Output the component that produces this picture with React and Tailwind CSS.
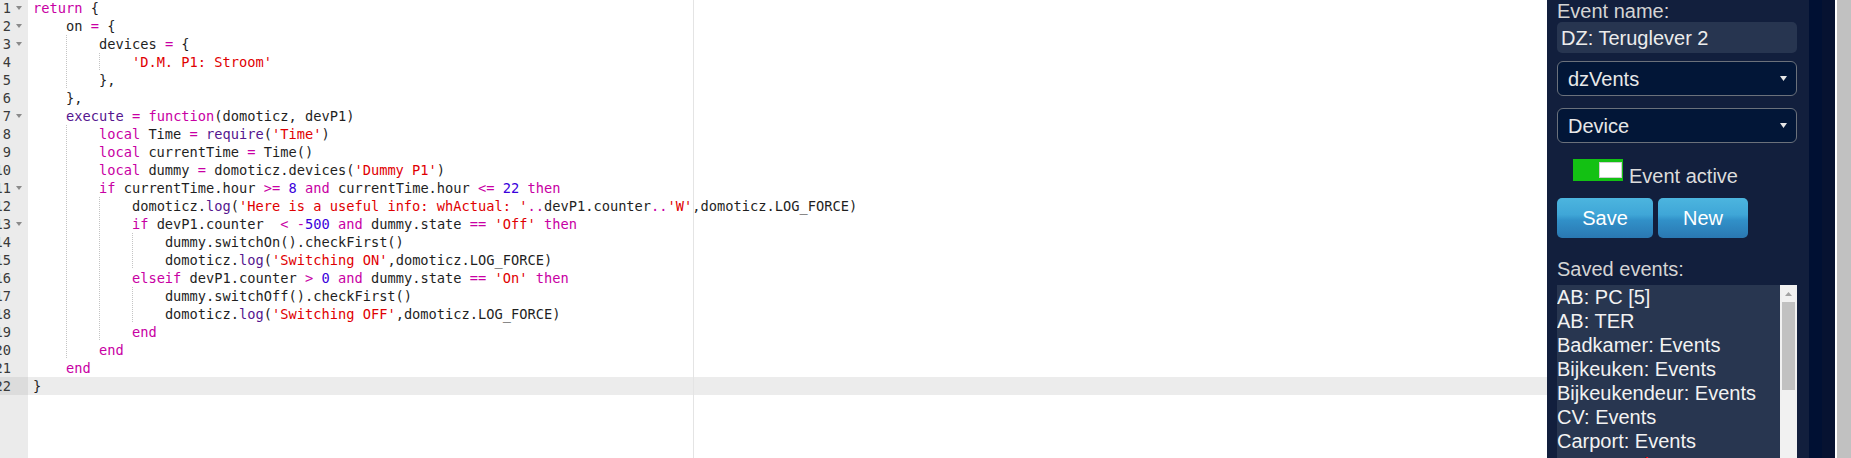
import React from 'react'

const CODE = [
  "return {",
  "    on = {",
  "        devices = {",
  "            'D.M. P1: Stroom'",
  "        },",
  "    },",
  "    execute = function(domoticz, devP1)",
  "        local Time = require('Time')",
  "        local currentTime = Time()",
  "        local dummy = domoticz.devices('Dummy P1')",
  "        if currentTime.hour >= 8 and currentTime.hour <= 22 then",
  "            domoticz.log('Here is a useful info: whActual: '..devP1.counter..'W',domoticz.LOG_FORCE)",
  "            if devP1.counter  < -500 and dummy.state == 'Off' then",
  "                dummy.switchOn().checkFirst()",
  "                domoticz.log('Switching ON',domoticz.LOG_FORCE)",
  "            elseif devP1.counter > 0 and dummy.state == 'On' then",
  "                dummy.switchOff().checkFirst()",
  "                domoticz.log('Switching OFF',domoticz.LOG_FORCE)",
  "            end",
  "        end",
  "    end",
  "}",
]
const FOLDS = [1, 2, 3, 7, 11, 13]
const ACTIVE = 22

const TOK = /('[^']*')|\b(return|local|if|and|then|end|elseif|function)\b|\b(execute|require|log)\b|\b(\d+)\b|(>=|<=|==|\.\.|[=<>-])|([\s\S])/g
const CLS = {
  str: 'text-[#df0002]',
  kw: 'text-[#c800a4]',
  fn: 'text-[#55168f]',
  num: 'text-[#3a00dc]',
  op: 'text-[#c800a4]',
}

function tokens(s) {
  const out = []
  let m
  TOK.lastIndex = 0
  while ((m = TOK.exec(s))) {
    const t = m[1] ? 'str' : m[2] ? 'kw' : m[3] ? 'fn' : m[4] ? 'num' : m[5] ? 'op' : ''
    const last = out[out.length - 1]
    if (last && last.t === t && t === '') last.v += m[0]
    else out.push({ t, v: m[0] })
  }
  return out
}

function Line({ text, n }) {
  const ind = text.match(/^ */)[0].length / 4
  const rest = text.trimStart()
  return (
    <div className={`h-[18px] leading-[18px] whitespace-pre pl-[5px] ${n === ACTIVE ? 'bg-[#ececec]' : ''}`}>
      {Array.from({ length: ind }).map((_, k) => (
        <span key={k}
          className={`inline-block h-[18px] align-top ${k > 0 ? 'bg-[repeating-linear-gradient(to_bottom,#c4c4c4_0_1px,transparent_1px_2px)] bg-[length:1px_100%] bg-no-repeat' : ''}`}>
          {'    '}
        </span>
      ))}
      {tokens(rest).map((tk, i) =>
        n === 1 && tk.v === '{' ? (
          <span key={i} className="shadow-[inset_0_0_0_1px_#c0c0c0]">{'{'}</span>
        ) : (
          <span key={i} className={CLS[tk.t] || ''}>{tk.v}</span>
        )
      )}
    </div>
  )
}

function Editor() {
  return (
    <div className="flex-1 min-w-0 flex overflow-hidden bg-white font-['DejaVu_Sans_Mono',monospace] text-[13.7px] text-[#1f1f1f]">
      <div className="w-[28px] shrink-0 bg-[#ebebeb] text-[#3a3a3a]">
        <div className="-mt-px">
          {CODE.map((_, i) => (
            <div key={i} className={`h-[18px] leading-[18px] flex items-center ${i + 1 === ACTIVE ? 'bg-[#dcdcdc]' : ''}`}>
              <div className="w-[11px] shrink-0 flex justify-end whitespace-nowrap">{i + 1}</div>
              {FOLDS.includes(i + 1) && (
                <svg width="6" height="4" viewBox="0 0 6 4" className="ml-[5px]">
                  <polygon points="0,0 6,0 3,4" fill="#8a8a8a" />
                </svg>
              )}
            </div>
          ))}
        </div>
      </div>
      <div className="relative flex-1 min-w-0">
        <div className="-mt-px">
          {CODE.map((l, i) => <Line key={i} text={l} n={i + 1} />)}
        </div>
        <div className="absolute top-0 bottom-0 left-[665px] w-px bg-[#e4e4e4]" />
      </div>
    </div>
  )
}

const Arrow = () => (
  <svg width="7" height="5" viewBox="0 0 7 5"><polygon points="0,0 7,0 3.5,5" fill="#e6e6e6" /></svg>
)

const SAVED = ['AB: PC [5]', 'AB: TER', 'Badkamer: Events', 'Bijkeuken: Events', 'Bijkeukendeur: Events', 'CV: Events', 'Carport: Events']

function Sidebar() {
  const btn = "h-[40px] rounded-[5px] flex items-center justify-center text-white bg-[linear-gradient(#4cb5df,#3fa6d7_42%,#3190c8_56%,#2a78b2)]"
  return (
    <div className="w-[262px] shrink-0 bg-[#121f3d] pl-[10px] pr-[12px] flex flex-col overflow-hidden font-['Liberation_Sans',Arial,sans-serif] text-[20px]">
      <div className="h-[22px] leading-[22px] text-[#d4d4d4]">Event name:</div>
      <div className="h-[31px] shrink-0 rounded-[5px] bg-[#273550] pl-[4px] flex items-center text-[#ececec]">DZ: Teruglever 2</div>
      <div className="mt-[8px] h-[35px] shrink-0 rounded-[6px] border border-[#6b717b] bg-[#021637] pl-[10px] pr-[9px] flex items-center justify-between text-[#e8e8e8]">
        <span>dzVents</span><Arrow />
      </div>
      <div className="mt-[12px] h-[35px] shrink-0 rounded-[6px] border border-[#6b717b] bg-[#021637] pl-[10px] pr-[9px] flex items-center justify-between text-[#e8e8e8]">
        <span>Device</span><Arrow />
      </div>
      <div className="mt-[16px] flex items-start pl-[16px]">
        <div className="relative w-[50px] h-[22px] shrink-0 bg-[#13c113]">
          <div className="absolute right-[1px] top-[3px] w-[23px] h-[16px] bg-white border border-[#cfcfcf]" />
        </div>
        <span className="ml-[6px] mt-[6px] h-[22px] leading-[22px] text-[#dcdcdc]">Event active</span>
      </div>
      <div className="mt-[11px] flex gap-[5px]">
        <div className={`w-[96px] ${btn}`}>Save</div>
        <div className={`w-[90px] ${btn}`}>New</div>
      </div>
      <div className="mt-[20px] h-[22px] leading-[22px] text-[#d4d4d4]">Saved events:</div>
      <div className="mt-[5px] flex-1 min-h-0 flex bg-[#283650] overflow-hidden">
        <div className="flex-1 min-w-0 text-[#f2f2f2] leading-[24px] whitespace-nowrap">
          {SAVED.map(s => <div key={s}>{s}</div>)}
          <div className="text-[#ff0000]">DZ: Teruglever 2</div>
        </div>
        <div className="w-[17px] shrink-0 bg-[#f1f1f1] flex flex-col items-center">
          <div className="h-[17px] flex items-center">
            <svg width="7" height="4" viewBox="0 0 7 4"><polygon points="3.5,0 7,4 0,4" fill="#a3a3a3" /></svg>
          </div>
          <div className="w-[13px] h-[88px] bg-[#c1c1c1]" />
        </div>
      </div>
    </div>
  )
}

export default function App() {
  return (
    <div className="flex h-[458px] w-full overflow-hidden">
      <Editor />
      <Sidebar />
      <div className="w-[13px] shrink-0 bg-[#001033]" />
      <div className="w-[13px] shrink-0 bg-[#061231]" />
      <div className="w-[2px] shrink-0 bg-white" />
      <div className="w-[14px] shrink-0 bg-[#c1c1c1]" />
    </div>
  )
}
